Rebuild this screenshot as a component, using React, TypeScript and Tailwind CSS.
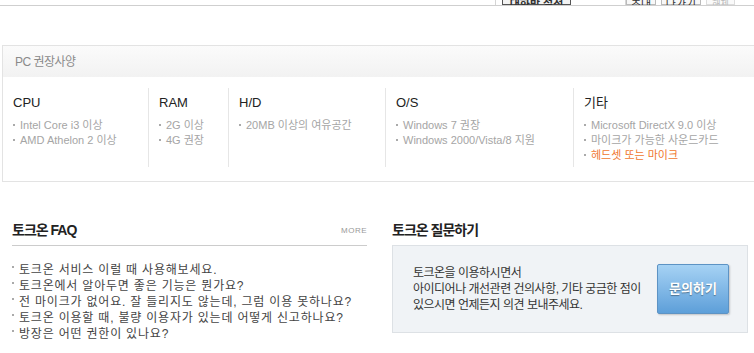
const font = { fontFamily: '"Liberation Sans", "Noto Sans CJK KR", sans-serif' };

const specs = [
  { title: 'CPU', w: 'w-[145px]', items: ['Intel Core i3 이상', 'AMD Athelon 2 이상'] },
  { title: 'RAM', w: 'w-[80px]', items: ['2G 이상', '4G 권장'] },
  { title: 'H/D', w: 'w-[157px]', items: ['20MB 이상의 여유공간'] },
  { title: 'O/S', w: 'w-[188px]', items: ['Windows 7 권장', 'Windows 2000/Vista/8 지원'] },
  { title: '기타', w: 'w-[190px]', items: ['Microsoft DirectX 9.0 이상', '마이크가 가능한 사운드카드'] },
];

const faqs = [
  '토크온 서비스 이럴 때 사용해보세요.',
  '토크온에서 알아두면 좋은 기능은 뭔가요?',
  '전 마이크가 없어요. 잘 들리지도 않는데, 그럼 이용 못하나요?',
  '토크온 이용할 때, 불량 이용자가 있는데 어떻게 신고하나요?',
  '방장은 어떤 권한이 있나요?',
];

function Bullet() {
  return <span className="inline-block w-[2px] h-[2px] bg-[#aaa] mr-[5px] align-middle relative -top-[1px]" />;
}

export default function App() {
  return (
    <div className="w-[754px] h-[353px] bg-white overflow-hidden" style={font}>
      {/* 상단 잘린 툴바 */}
      <div className="h-[6px] border-b border-[#cfcfcf] flex items-end overflow-hidden">
        <div className="w-[495px] shrink-0" />
        <div className="h-[20px] border-l border-[#d5d5d5] pl-[6px] shrink-0 flex items-end">
          <div className="w-[69px] h-[20px] border border-[#555] bg-[#f3f3f3] text-[11px] font-bold text-[#333] flex items-end justify-center leading-[16px]">
            <span className="relative top-[8px]">대화방 설정</span>
          </div>
        </div>
        <div className="w-[54px] shrink-0" />
        <div className="h-[20px] border-l border-[#d5d5d5] shrink-0 flex items-end gap-[5px]">
          <div className="w-[30px] h-[20px] border border-[#bbb] bg-[#f8f8f8] text-[11px] text-[#333] flex justify-center items-end"><span className="relative top-[8px]">초대</span></div>
          <div className="w-[40px] h-[20px] border border-[#bbb] bg-[#f8f8f8] text-[11px] text-[#333] flex justify-center items-end"><span className="relative top-[8px]">나가기</span></div>
          <div className="w-[29px] h-[20px] border border-[#ddd] bg-[#fafafa] text-[9px] text-[#bbb] flex justify-center items-end"><span className="relative top-[7px]">해제</span></div>
        </div>
      </div>

      {/* PC 권장사양 */}
      <div className="mt-[39px] ml-[2px] w-[770px] border border-[#e3e3e3]">
        <div className="h-[31px] bg-gradient-to-b from-[#fbfbfb] to-[#f2f2f2] flex items-center pl-[12px] pt-[1px] text-[12px] tracking-[-0.5px] text-[#8a8a8a]">
          PC 권장사양
        </div>
        <div className="flex pt-[11px] pb-[14px]">
          {specs.map((s, i) => (
            <div
              key={s.title}
              className={`${s.w} shrink-0 h-[79px] pl-[10px] pt-[7px] ${i > 0 ? 'border-l border-[#e6e6e6]' : ''}`}
            >
              <div className="text-[13px] text-[#222] leading-[16px]">{s.title}</div>
              <ul className="mt-[7px] text-[11px] text-[#a5a5a5] leading-[15px]">
                {s.items.map((t) => (
                  <li key={t}>
                    <Bullet />
                    {t}
                  </li>
                ))}
                {s.title === '기타' && (
                  <li className="text-[#f0772f]">
                    <Bullet />
                    헤드셋 또는 마이크
                  </li>
                )}
              </ul>
            </div>
          ))}
        </div>
      </div>

      {/* 하단 두 칼럼 */}
      <div className="flex mt-[39px]">
        <div className="w-[355px] ml-[12px] shrink-0">
          <div className="flex items-end justify-between pb-[6px] border-b border-[#cccccc]">
            <h2 className="text-[14px] font-bold text-[#222] leading-[18px] tracking-[-1px]">토크온 FAQ</h2>
            <span className="text-[8px] text-[#999] tracking-[0.5px] pb-[2px]">MORE</span>
          </div>
          <ul className="mt-[16px] text-[12px] text-[#444] leading-[16px] tracking-[0.8px]">
            {faqs.map((q) => (
              <li key={q} className="flex items-start">
                <span className="inline-block w-[2px] h-[2px] bg-[#aaa] mt-[4px] mr-[5px] shrink-0" />
                {q}
              </li>
            ))}
          </ul>
        </div>
        <div className="ml-[25px] w-[356px] shrink-0">
          <h2 className="text-[14px] font-bold text-[#222] leading-[18px] pb-[6px] tracking-[-1px]">토크온 질문하기</h2>
          <div className="h-[88px] bg-[#f0f3f6] border border-[#dde1e5] flex items-center justify-between pl-[20px] pr-[18px]">
            <p className="text-[12px] text-[#333] leading-[16px] tracking-[-0.5px]">
              토크온을 이용하시면서
              <br />
              아이디어나 개선관련 건의사항, 기타 궁금한 점이
              <br />
              있으시면 언제든지 의견 보내주세요.
            </p>
            <button className="w-[72px] h-[50px] rounded-[2px] border border-[#5d93c4] bg-gradient-to-b from-[#a6d2f4] to-[#5d9fd9] text-white text-[13px] font-bold shadow-[1px_1px_2px_rgba(0,0,0,0.2)] [text-shadow:0_1px_1px_rgba(0,0,0,0.35)]">
              문의하기
            </button>
          </div>
        </div>
      </div>
    </div>
  );
}
